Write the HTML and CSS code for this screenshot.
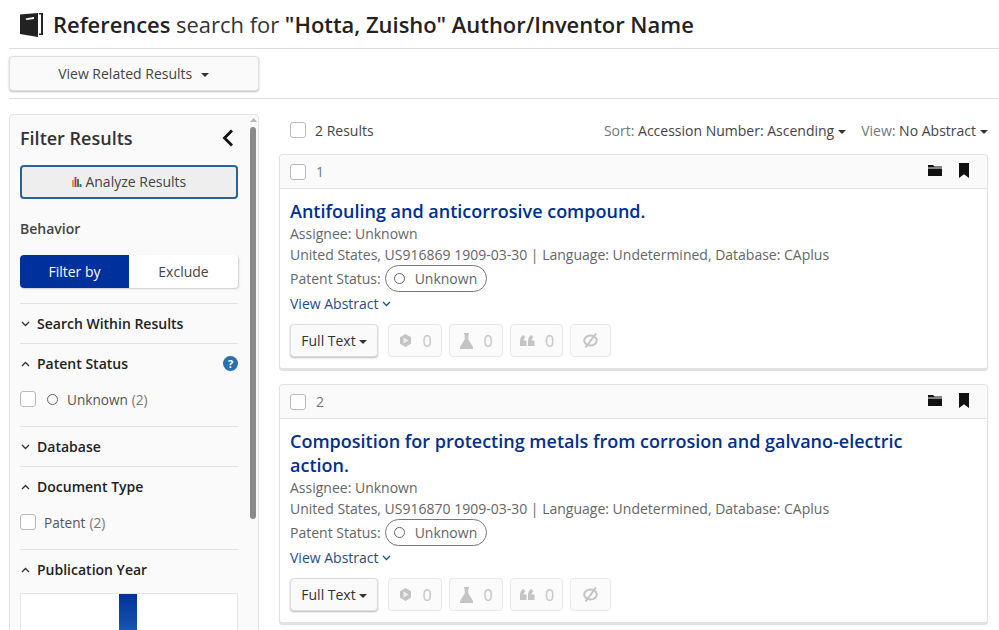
FILE: index.html
```html
<!DOCTYPE html>
<html lang="en">
<head>
<meta charset="utf-8">
<title>References</title>
<link rel="stylesheet" href="styles.css">
</head>
<body>
<header class="page-title">
  <svg class="book" width="25" height="26" viewBox="0 0 25 26"><path d="M2 3.500 20 2V26L2 23Z" fill="#222"/><path d="M21 2H25V24H21V22.500H23V3.500H21Z" fill="#222"/><path d="M7.500 7.500 16 6V8L8.500 9Z" fill="#fff"/></svg>
  <h1><b>References</b> search for <b>"Hotta, Zuisho" Author/Inventor Name</b></h1>
</header>
<div class="related-bar">
  <button class="related-btn">View Related Results <i class="caret caret-gap"></i></button>
</div>
<div class="content">
  <aside class="sidebar">
    <div class="side-inner">
      <div class="filter-head"><h2>Filter Results</h2>
        <svg width="12" height="18" viewBox="0 0 12 18"><path d="M10 1.500 2.500 9 10 16.500" fill="none" stroke="#111" stroke-width="2.800"/></svg>
      </div>
      <button class="analyze"><span class="analyze-label"><svg width="10" height="10" viewBox="0 0 10 10"><rect x="0" y="3" width="2" height="7" fill="#e0a030"/><rect x="2.500" y="0" width="2" height="10" fill="#d0306f"/><rect x="5" y="2" width="2" height="8" fill="#2f8f5b"/><rect x="7.500" y="7" width="2" height="3" fill="#2a6db0"/></svg> Analyze Results</span></button>
      <div class="behavior">Behavior</div>
      <div class="toggle"><span class="on">Filter by</span><span class="off">Exclude</span></div>
      <section class="facet facet-closed"><div class="facet-title"><svg class="chev" width="9" height="6" viewBox="0 0 9 6"><path d="M1 1 4.500 4.500 8 1" fill="none" stroke="#333" stroke-width="1.300"/></svg>Search Within Results</div></section>
      <section class="facet">
        <div class="facet-title"><svg class="chev" width="9" height="6" viewBox="0 0 9 6"><path d="M1 5 4.500 1.500 8 5" fill="none" stroke="#333" stroke-width="1.300"/></svg>Patent Status
          <span class="help">?</span></div>
        <label class="option"><span class="check"></span><span class="ring ring-opt"></span>Unknown <em>(2)</em></label>
      </section>
      <section class="facet facet-closed"><div class="facet-title"><svg class="chev" width="9" height="6" viewBox="0 0 9 6"><path d="M1 1 4.500 4.500 8 1" fill="none" stroke="#333" stroke-width="1.300"/></svg>Database</div></section>
      <section class="facet">
        <div class="facet-title"><svg class="chev" width="9" height="6" viewBox="0 0 9 6"><path d="M1 5 4.500 1.500 8 5" fill="none" stroke="#333" stroke-width="1.300"/></svg>Document Type</div>
        <label class="option"><span class="check check-doc"></span>Patent <em>(2)</em></label>
      </section>
      <section class="facet">
        <div class="facet-title"><svg class="chev" width="9" height="6" viewBox="0 0 9 6"><path d="M1 5 4.500 1.500 8 5" fill="none" stroke="#333" stroke-width="1.300"/></svg>Publication Year</div>
        <div class="chart"><div class="bar"></div></div>
      </section>
    </div>
    <div class="scrolltrack"><svg width="7" height="4" viewBox="0 0 7 4"><path d="M3.500 0 7 4H0Z" fill="#b5b5b5"/></svg><div class="thumb"></div></div>
  </aside>
  <main class="results">
    <div class="toolbar">
      <span class="check"></span><span class="count">2 Results</span>
      <span class="sort"><span class="muted">Sort:</span> Accession Number: Ascending<i class="caret"></i></span>
      <span class="view"><span class="muted">View:</span> No Abstract<i class="caret"></i></span>
    </div>
    <article class="card">
      <div class="card-head"><span class="check"></span><span class="num">1</span>
        <svg class="folder" width="16" height="13" viewBox="0 0 16 13"><path d="M1 1H6L7.500 2.500H15V3.500H1ZM1 4.500H15V12H1Z" fill="#111"/></svg>
        <svg class="mark" width="10" height="15" viewBox="0 0 10 15"><path d="M0 0H10V15L5 11.200 0 15Z" fill="#111"/></svg>
      </div>
      <div class="card-body">
        <h3>Antifouling and anticorrosive compound.</h3>
        <p>Assignee: Unknown</p>
        <p>United States, US916869 1909-03-30 | Language: Undetermined, Database: CAplus</p>
        <p class="status">Patent Status: <span class="pill"><span class="ring"></span>Unknown</span></p>
        <a class="abstract">View Abstract <svg width="9" height="6" viewBox="0 0 9 6"><path d="M1 1 4.500 4.500 8 1" fill="none" stroke="#1f4e86" stroke-width="1.300"/></svg></a>
        <div class="actions">
          <button class="fulltext">Full Text<i class="caret"></i></button>
          <span class="stat"><svg width="13" height="13" viewBox="0 0 13 13"><path d="M6.500 0 12 3.200V9.800L6.500 13 1 9.800V3.200Z" fill="#c4c4c4"/><path d="M4.500 3.500 9.500 6.500 4.500 9.500Z" fill="#eee"/></svg>0</span>
          <span class="stat"><svg width="13" height="16" viewBox="0 0 13 16"><path d="M4 0H9V1.500H8.300V6.500L13 14V16H0V14L4.700 6.500V1.500H4Z" fill="#c4c4c4"/></svg>0</span>
          <span class="stat stat-quote"><svg width="15" height="11" viewBox="0 0 15 11"><path d="M3.500 0C1 1 0 3.500 0 6.500V11H6.500V5.500H3.500C3.500 4 4.500 3 5.500 2.500ZM11.500 0C9 1 8 3.500 8 6.500V11H14.500V5.500H11.500C11.500 4 12.500 3 13.500 2.500Z" fill="#c4c4c4"/></svg>0</span>
          <span class="stat stat-last"><svg width="15" height="15" viewBox="0 0 15 15"><ellipse cx="7.500" cy="7.500" rx="6.300" ry="5" fill="none" stroke="#c4c4c4" stroke-width="2"/><path d="M13 .5 2.500 14.500" stroke="#c4c4c4" stroke-width="2"/></svg></span>
        </div>
      </div>
    </article>
    <article class="card">
      <div class="card-head"><span class="check"></span><span class="num">2</span>
        <svg class="folder" width="16" height="13" viewBox="0 0 16 13"><path d="M1 1H6L7.500 2.500H15V3.500H1ZM1 4.500H15V12H1Z" fill="#111"/></svg>
        <svg class="mark" width="10" height="15" viewBox="0 0 10 15"><path d="M0 0H10V15L5 11.200 0 15Z" fill="#111"/></svg>
      </div>
      <div class="card-body">
        <h3>Composition for protecting metals from corrosion and galvano-electric action.</h3>
        <p>Assignee: Unknown</p>
        <p>United States, US916870 1909-03-30 | Language: Undetermined, Database: CAplus</p>
        <p class="status">Patent Status: <span class="pill"><span class="ring"></span>Unknown</span></p>
        <a class="abstract">View Abstract <svg width="9" height="6" viewBox="0 0 9 6"><path d="M1 1 4.500 4.500 8 1" fill="none" stroke="#1f4e86" stroke-width="1.300"/></svg></a>
        <div class="actions">
          <button class="fulltext">Full Text<i class="caret"></i></button>
          <span class="stat"><svg width="13" height="13" viewBox="0 0 13 13"><path d="M6.500 0 12 3.200V9.800L6.500 13 1 9.800V3.200Z" fill="#c4c4c4"/><path d="M4.500 3.500 9.500 6.500 4.500 9.500Z" fill="#eee"/></svg>0</span>
          <span class="stat"><svg width="13" height="16" viewBox="0 0 13 16"><path d="M4 0H9V1.500H8.300V6.500L13 14V16H0V14L4.700 6.500V1.500H4Z" fill="#c4c4c4"/></svg>0</span>
          <span class="stat stat-quote"><svg width="15" height="11" viewBox="0 0 15 11"><path d="M3.500 0C1 1 0 3.500 0 6.500V11H6.500V5.500H3.500C3.500 4 4.500 3 5.500 2.500ZM11.500 0C9 1 8 3.500 8 6.500V11H14.500V5.500H11.500C11.500 4 12.500 3 13.500 2.500Z" fill="#c4c4c4"/></svg>0</span>
          <span class="stat stat-last"><svg width="15" height="15" viewBox="0 0 15 15"><ellipse cx="7.500" cy="7.500" rx="6.300" ry="5" fill="none" stroke="#c4c4c4" stroke-width="2"/><path d="M13 .5 2.500 14.500" stroke="#c4c4c4" stroke-width="2"/></svg></span>
        </div>
      </div>
    </article>
  </main>
</div>
</body>
</html>
```

FILE: styles.css
```css
* { box-sizing: border-box; }
html, body { margin: 0; height: 630px; overflow: hidden; }
body { font-family: "Open Sans", sans-serif; font-size: 14px; color: #333; background: #fff; padding-left: 9px; }
button { font-family: inherit; }

.page-title { display: flex; align-items: center; height: 49px; border-bottom: 1px solid #dedede; padding-left: 9px; }
.book { margin-right: 10px; }
.page-title h1 { margin: 2px 0 0; font-size: 21.93px; font-weight: 400; line-height: 30px; color: #333; }
.page-title b { font-weight: 600; color: #222; }

.related-bar { height: 50px; padding-top: 7px; border-bottom: 1px solid #dedede; }
.related-btn { width: 250px; height: 35px; padding: 0 7px 1px 6px; background: #fafafa; border: 1px solid #e0e0e0; border-radius: 4px; box-shadow: 0 1px 2px #bbb; font-size: 14px; color: #444; }
.caret { display: inline-block; width: 0; height: 0; border: 4px solid transparent; border-top-color: #333; border-bottom: 0; margin-left: 4px; vertical-align: 2px; }
.caret-gap { margin-left: 5px; }

.content { display: flex; gap: 20px; padding-top: 15px; }

.sidebar { width: 250px; height: 600px; flex: none; display: flex; background: #fafafa; border: 1px solid #e4e4e4; border-radius: 4px 4px 0 0; }
.side-inner { width: 238px; flex: none; padding: 8px 10px 0 10px; }
.filter-head { display: flex; justify-content: space-between; align-items: center; height: 30px; padding-right: 4px; }
.filter-head h2 { margin: 0; font-size: 18px; font-weight: 600; color: #333; }
.analyze { display: block; width: 100%; height: 34px; margin-top: 12px; padding: 0 0 2px; background: #eee; border: 2px solid #2a6496; border-radius: 4px; font-size: 14px; color: #444; }
.behavior { margin-top: 19px; font-weight: 600; font-size: 14px; line-height: 22px; color: #444; }
.toggle { display: flex; height: 33px; margin-top: 15px; border-radius: 4px; box-shadow: 1px 1px 2px #ccc; background: #fff; text-align: center; line-height: 33px; }
.toggle span { flex: 1; }
.toggle .on { background: #00309c; color: #fff; border-radius: 4px 0 0 4px; }
.toggle .off { color: #444; }

.facet { border-top: 1px solid #e2e2e2; }
.toggle + .facet { margin-top: 15px; }
.facet-closed { height: 40px; }
.facet-title { display: flex; align-items: center; height: 39px; font-weight: 600; color: #222; }
.chev { margin: 1px 7px 0 1px; }
.help { margin-left: auto; width: 15px; height: 15px; border-radius: 50%; background: #2a6fb0; color: #fff; font-size: 11px; font-weight: 700; line-height: 15px; text-align: center; }
.option { display: flex; align-items: center; height: 24px; margin: 4px 0 15px; font-size: 13.6px; color: #555; }
.option em { font-style: normal; color: #777; margin-left: 4px; }
.check { display: inline-block; flex: none; width: 16px; height: 16px; background: #fff; border: 1px solid #bbb; border-radius: 3px; }
.option .check { margin-right: 11px; }
.option .check-doc { margin-right: 8px; }
.ring { display: inline-block; flex: none; width: 11px; height: 11px; border: 1px solid #666; border-radius: 50%; }
.ring-opt { margin: 0 9px 0 0; }
.chart { height: 60px; border: 1px solid #e6e6e6; border-bottom: 0; background: #fff; padding-left: 98px; margin-top: 4px; }
.bar { width: 18px; height: 60px; background: linear-gradient(#00309c, #2a6fc0); }

.scrolltrack { flex: none; width: 10px; display: flex; flex-direction: column; align-items: center; padding-top: 3px; }
.thumb { width: 6px; height: 392px; margin-top: 5px; background: #8a8a8a; border-radius: 3px; }

.results { width: 709px; flex: none; }
.toolbar { display: flex; align-items: center; height: 30px; padding: 2px 0 0 11px; margin-bottom: 10px; }
.count { margin-left: 9px; color: #444; }
.muted { color: #777; }
.sort { margin-left: auto; color: #444; }
.view { margin-left: 15px; color: #444; }

.card { height: 216px; margin-bottom: 14px; border: 1px solid #e2e2e2; border-bottom-width: 2px; border-radius: 4px; background: #fff; box-shadow: 0 1px 1px #ddd; }
.card + .card { height: 240px; }
.card-head { display: flex; align-items: center; height: 34px; padding: 0 18px 0 10px; background: #fafafa; border-bottom: 1px solid #e2e2e2; border-radius: 4px 4px 0 0; }
.num { margin-left: 10px; color: #777; }
.folder { margin: 0 0 3px auto; }
.mark { margin: 0 0 3px 16px; }
.card-body { padding: 10px 10px 0; }
.card-body h3 { margin: 0; font-size: 18px; font-weight: 600; line-height: 24px; color: #00308f; padding-right: 60px; }
.card-body p { margin: 0; line-height: 21px; color: #666; }
.card-body .status { display: flex; align-items: center; height: 27px; line-height: 27px; }
.pill { display: inline-flex; align-items: center; height: 27px; margin-left: 4px; padding: 0 9px 0 8px; border: 1px solid #777; border-radius: 14px; color: #666; }
.pill .ring { margin-right: 10px; }
.abstract { display: block; line-height: 22px; margin-top: 1px; color: #1f4e86; }
.abstract svg { vertical-align: 2px; }
.actions { display: flex; gap: 7px; margin-top: 9px; }
.fulltext { width: 88px; height: 33px; margin-right: 3px; padding: 0; background: #fafafa; border: 1px solid #ddd; border-radius: 4px; box-shadow: 0 1px 2px #bbb; font-size: 14px; color: #333; }
.fulltext .caret { margin-left: 3px; }
.stat { display: flex; align-items: center; justify-content: center; gap: 10px; width: 54px; height: 33px; padding-left: 1px; background: #fbfbfb; border: 1px solid #e8e8e8; border-radius: 4px; color: #c4c4c4; font-size: 16px; }
.stat-quote { width: 53px; }
.stat-last { width: 41px; padding-left: 0; }
```
